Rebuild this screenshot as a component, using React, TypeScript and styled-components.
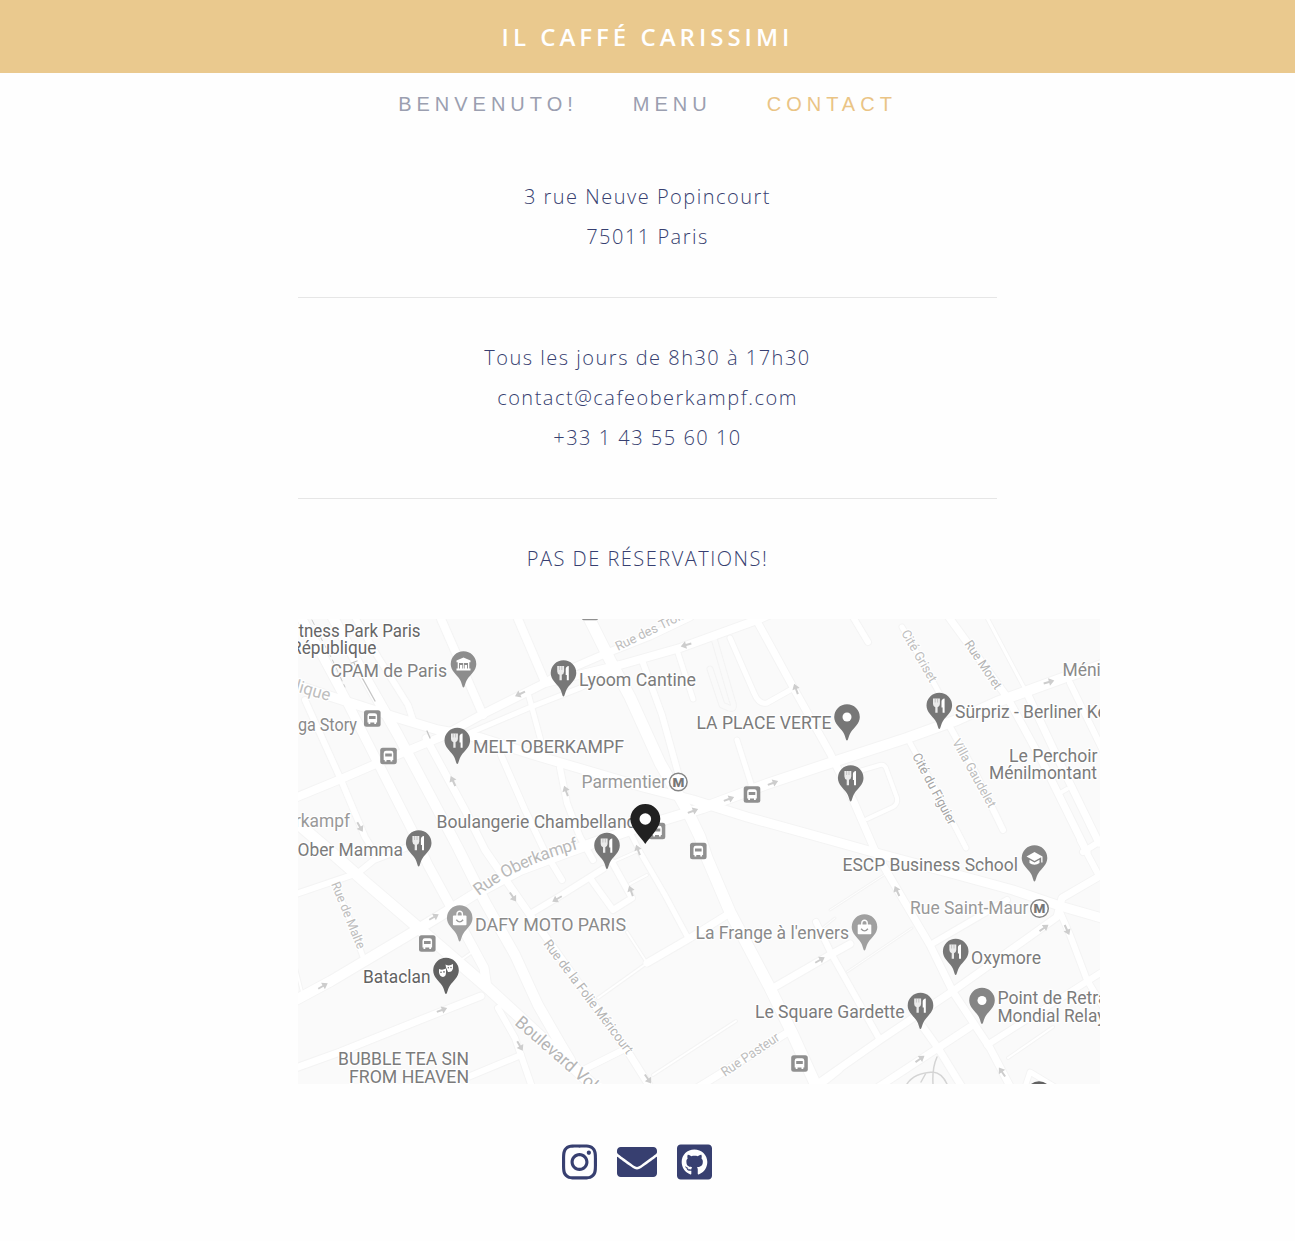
import React from 'react';
import styled, { createGlobalStyle, css } from 'styled-components';
import { FaInstagram, FaEnvelope, FaGithubSquare } from 'react-icons/fa';

const GlobalStyle = createGlobalStyle`
  * { box-sizing: border-box; }
  body { margin: 0; background: #fefefe; color: #373f70; font-family: 'Open Sans', sans-serif; }
`;

const Header = styled.header`
  height: 73px;
  display: flex;
  align-items: center;
  justify-content: center;
  background: #eac98e;
`;

const Title = styled.h1`
  margin: 0;
  padding-top: 1px;
  color: #fff;
  font-size: 24px;
  font-weight: 600;
  line-height: 36px;
  letter-spacing: 4px;
  text-transform: uppercase;
`;

const Nav = styled.nav`
  display: flex;
  justify-content: center;
  gap: 55px;
  padding-top: 16px;
  height: 104px;
`;

const NavLink = styled.a<{ $active?: boolean }>`
  font: 20px/30px 'Liberation Sans', Arial, sans-serif;
  letter-spacing: 5px;
  text-transform: uppercase;
  color: ${(p) => (p.$active ? '#eac485' : '#9b9fb0')};
`;

const Main = styled.main`
  width: 699px;
  margin: 0 auto;
`;

const Block = styled.section<{ $ruled?: boolean }>`
  padding-bottom: 40px;
  margin-bottom: 40px;
  text-align: center;
  ${(p) => p.$ruled && css`border-bottom: 1px solid #e6e6e6;`}
`;

const Line = styled.p`
  margin: 0;
  font-size: 20px;
  font-weight: 300;
  line-height: 40px;
  letter-spacing: 1.5px;
`;

const MapFrame = styled.svg`
  display: block;
  width: 802px;
  height: 465px;
  margin-top: -40px;
  font-family: Roboto, sans-serif;
`;

const Socials = styled.footer`
  display: flex;
  justify-content: center;
  padding: 58px 1px 0 0;
  height: 157px;
`;

const SocialLink = styled.a<{ $width: number }>`
  width: ${(p) => p.$width}px;
  height: 40px;
  margin-right: 20px;
  color: #373f70;
  svg { display: block; width: 100%; height: 40px; }
`;

const ROADS: [number, string][] = [
  [9, 'M290 683L348 702L398 718L438 730L481 738L531 754L568 765L643 787L693 800L747 817L830 840L880 854L947 872L1013 890L1060 906L1105 919'],
  [11, 'M290 817L331 852L365 882L421 930L458 962L488 988L525 1022L568 1062L600 1092'],
  [10, 'M290 1003L331 981L405 937L438 917L475 894L520 870L568 852L630 830L670 818L703 808L767 784L830 763L907 738L957 720L997 702L1063 678L1105 664'],
  [8, 'M290 800L341 779L378 763L441 737L485 713L545 683L620 665L680 648L757 620L775 612'],
  [5, 'M465 735L531 707L580 688L618 668'],
  [7, 'M545 682L570 669L607 653L650 636L690 617'],
  [9, 'M298 612L321 653L345 698L378 763L411 828L428 865L458 920L484 968L487 988'],
  [10, 'M330 612L365 677L398 735L431 797L458 848L485 902L515 955L538 1005L561 1045L570 1060'],
  [6, 'M352 612L378 657L408 705L413 720'],
  [7, 'M426 738L465 810L485 850L528 912L580 985L630 1055L652 1090'],
  [8, 'M438 612L483 715'],
  [8, 'M515 612L545 682'],
  [5, 'M528 693L545 756'],
  [6, 'M501 745V755L525 810L545 852L562 880'],
  [6, 'M560 768L567 803L580 837L593 860'],
  [11, 'M586 612L610 660L630 697L660 763L687 810L700 837L707 858L730 912L770 988L793 1035L818 1090'],
  [6, 'M643 663L662 715L680 780'],
  [5, 'M677 650L693 699'],
  [7, 'M752 612L793 687L830 753L853 800L876 853L887 872L930 945L953 992L990 1048L1012 1090'],
  [5, 'M737 740L753 790'],
  [5, 'M730 638L754 693Q759 705 767 703L792 689'],
  [6, 'M850 612L868 642'],
  [5, 'M902 627L920 658L943 700'],
  [6, 'M950 727L975 772L1003 830'],
  [5, 'M910 743L935 788L966 848'],
  [7, 'M945 612L1007 697L1043 763L1087 852'],
  [3, 'M984 612L1027 693'],
  [7, 'M1027 693L1060 763L1099 843'],
  [6, 'M1070 683L1105 755'],
  [4, 'M1060 793L1067 789'],
  [6, 'M1083 852L1105 838'],
  [4, 'M853 773L880 765Q884 764 886 768L897 798Q898 804 893 807L867 819'],
  [7, 'M820 1082L880 1040L953 991L1057 917L1062 898L1105 873'],
  [6, 'M1080 840L1098 874'],
  [6, 'M1060 912L1070 935L1087 980L1105 1010'],
  [6, 'M930 945L1007 900'],
  [6, 'M816 922L832 955L880 1040'],
  [1, 'M830 910L887 873M847 972L912 928M820 930L835 918'],
  [6, 'M987 1045L1105 970'],
  [2, 'M1008 1058L1053 1027'],
  [7, 'M877 1088L970 1027'],
  [7, 'M923 1027L938 1048L965 1092'],
  [7, 'M773 988L830 955L850 944'],
  [7, 'M697 1088L790 1031'],
  [5, 'M815 1090L840 1070'],
  [7, 'M647 963L690 938L730 913'],
  [2, 'M598 998L647 963L627 932'],
  [5, 'M625 822L640 852L665 895L687 936'],
  [6, 'M590 878L613 910L632 898L612 862'],
  [2, 'M613 862L640 850M630 884L647 875'],
  [6, 'M530 914L560 896L603 869'],
  [2, 'M653 1075L736 1021'],
  [6, 'M583 1070L627 1048'],
  [7, 'M290 1070L340 1052L420 1020L481 996'],
  [6, 'M468 1077L521 1055'],
  [6, 'M498 1008L515 1038L533 1090'],
  [6, 'M290 896L358 873L374 860L413 845'],
  [5, 'M334 882L348 915L363 957'],
  [2, 'M294 960L302 992M458 962L471 953'],
  [6, 'M305 700L341 780L365 837L378 858'],
  [5, 'M1026 1084L1030 1072L1060 1090'],
];

const COURT_LOOP = 'M713 635L732 700Q736 710 729 708L722 705L710 669';

const ARROWS: [number, number, number][] = [
  [520, 694, 155], [686, 645, 165], [796, 689, -110], [453, 781, -115], [360, 827, 60],
  [566, 791, -110], [729, 799, -20], [773, 783, -20], [693, 811, -20], [1049, 682, -15],
  [434, 917, -30], [513, 897, 55], [557, 899, 150], [323, 986, -30], [442, 1010, -20],
  [520, 1046, 60], [631, 891, -110], [638, 850, -110], [648, 1079, 55], [820, 960, -30],
  [897, 891, -115], [1044, 928, -35], [1067, 930, 65], [920, 1059, -35], [1002, 1072, -125],
];

type Kind = 'food' | 'dot' | 'bag' | 'bank' | 'mask' | 'school';

const PINS: [number, number, Kind, string][] = [
  [463.5, 664, 'bank', '#8d8d8d'], [563.5, 673, 'food', '#777'], [457.3, 740.5, 'food', '#777'],
  [847, 717, 'dot', '#777'], [939.3, 705.5, 'food', '#777'], [850.7, 778, 'food', '#777'],
  [418.7, 843, 'food', '#777'], [607, 845.5, 'food', '#777'], [1034.5, 858, 'school', '#858585'],
  [459.7, 918, 'bag', '#a0a0a0'], [446, 970.5, 'mask', '#626262'], [864.5, 927, 'bag', '#a0a0a0'],
  [955.7, 951.5, 'food', '#777'], [920.5, 1005.5, 'food', '#777'], [982, 1000.5, 'dot', '#858585'],
  [1039, 1094, 'food', '#626262'],
];

const STOPS: [number, number][] = [
  [372.3, 718.5], [388.5, 756], [752, 794.5], [657, 831], [698.3, 851], [427.3, 943.5],
  [799.5, 1063.5], [590, 612],
];

/* text, x, baseline, width, colour */
const LABELS: [string, number, number, number, string][] = [
  ['Fitness Park Paris', 285, 637, 135.5, '#666'],
  ['République', 291, 654, 85.5, '#666'],
  ['CPAM de Paris', 330.5, 677, 116.5, '#818181'],
  ['Oméga Story', 264, 731, 93, '#8a8a8a'],
  ['MELT OBERKAMPF', 473, 753, 151, '#7b7b7b'],
  ['Lyoom Cantine', 579, 685.5, 117, '#7b7b7b'],
  ['LA PLACE VERTE', 696.5, 729, 135, '#7b7b7b'],
  ['Ménilmontant', 1062.5, 675.5, 108, '#8a8a8a'],
  ['Sürpriz - Berliner Kebab', 955, 718, 181, '#7b7b7b'],
  ['Le Perchoir', 1009, 762, 88.5, '#7b7b7b'],
  ['Ménilmontant', 989, 779.4, 108, '#7b7b7b'],
  ['Parmentier', 581.5, 788, 85.5, '#999'],
  ['Boulangerie Chambelland', 436.5, 828, 200, '#7b7b7b'],
  ['Oberkampf', 264, 827, 86, '#999'],
  ['Ober Mamma', 297.5, 855.5, 105.5, '#7b7b7b'],
  ['ESCP Business School', 842.5, 870.5, 175.5, '#7b7b7b'],
  ['Rue Saint-Maur', 910, 914, 118.5, '#999'],
  ['DAFY MOTO PARIS', 475, 930.7, 151, '#8a8a8a'],
  ["La Frange à l'envers", 695.5, 939.3, 153.5, '#8a8a8a'],
  ['Bataclan', 363, 983, 67.5, '#626262'],
  ['Oxymore', 971, 964.3, 70, '#7b7b7b'],
  ['Point de Retrait', 997.5, 1004.3, 120, '#7b7b7b'],
  ['Mondial Relay', 997.5, 1021.7, 108, '#7b7b7b'],
  ['Le Square Gardette', 755, 1018.3, 149.5, '#7b7b7b'],
  ['BUBBLE TEA SIN', 338, 1065.4, 131, '#7b7b7b'],
  ['FROM HEAVEN', 349, 1083, 120, '#7b7b7b'],
];

/* text, x, y, rotation, size, width, colour */
const STREETS: [string, number, number, number, number, number, string][] = [
  ['République', 249, 678, 16, 17, 83, '#bebebe'],
  ['Rue des Trois Bornes', 618, 651, -26, 13, 120, '#bdbdbd'],
  ['Cité Griset', 901, 633, 60, 13, 58, '#bdbdbd'],
  ['Rue Moret', 964, 644, 56, 13, 56, '#b5b5b5'],
  ['Cité du Figuier', 912, 756, 62, 13, 79, '#a5a5a5'],
  ['Villa Gaudelet', 952, 742, 61, 13, 76, '#bdbdbd'],
  ['Rue de Malte', 331, 884, 68, 13, 71, '#bdbdbd'],
  ['Rue de la Folie Méricourt', 543, 944, 53, 13.5, 139, '#b5b5b5'],
  ['Boulevard Voltaire', 514, 1024, 41, 17.5, 136, '#b5b5b5'],
  ['Rue Pasteur', 725, 1077, -34, 13.5, 67, '#bdbdbd'],
];

const Cutlery = () => (
  <g fill="#fff">
    <path d="M-6.3-7H0.6V-1.5Q0.4 1.2-1.7 1.8V7.3H-4V1.8Q-6.2 1.1-6.3-1.5Z" opacity=".85" />
    <path d="M-4.1-7V-3M-1.7-7V-3" stroke="#aaa" strokeWidth=".6" />
    <path d="M2.2-4Q2.4-6.7 5.3-7V7.3H3.3V2H2.2Z" />
  </g>
);

const PinGlyph = ({ kind }: { kind: Kind }) => {
  switch (kind) {
    case 'food':
      return <Cutlery />;
    case 'dot':
      return <circle r="4.5" fill="#fff" />;
    case 'bag':
      return (
        <g>
          <rect x="-6.8" y="-2.5" width="13.6" height="9.8" rx="1" fill="#fff" />
          <path d="M-2.7-2V-4A2.7 2.7 0 0 1 2.7-4V-2" fill="none" stroke="#fff" strokeWidth="1.4" />
          <path d="M-3.4 1.8Q0 6 3.4 1.8" fill="none" stroke="#999" strokeWidth="1.4" />
        </g>
      );
    case 'bank':
      return <path d="M-7-3.5L0-6.5L7-3.5V-1.8H5.8V4.5H7V6.5H-7V4.5H-5.8V-1.8H-7ZM-4.5-1V4.5H-3.5V1H-1.2V4.5H-.4V-1ZM.4-1V4.5H1.2V1H3.5V4.5H4.5V-1Z" fill="#fff" fillRule="evenodd" />;
    case 'mask':
      return (
        <g fill="#fff">
          <path d="M-7-1.5Q-3.5 0 0-2V2Q0 6-3 6.5Q-6.3 6-7 2ZM-.5-6Q3-4 7-6.5L7-2Q6 2 2 1.5L0-3Z" />
          <g fill="#626262"><circle cx="-5" cy="1.7" r=".8" /><circle cx="-2" cy="1.4" r=".8" /><circle cx="2.3" cy="-2.8" r=".7" /><circle cx="5" cy="-3" r=".7" /></g>
        </g>
      );
    case 'school':
      return (
        <g fill="#fff">
          <path d="M-8-1.5L0-6L8-1.5V4.5H6.7V-.8L0 3Z" />
          <path d="M-5 1.8L0 4.5L5 1.8V5Q3 6.7 0 6.7Q-3 6.7-5 5Z" />
        </g>
      );
  }
};

const CityMap = () => (
  <MapFrame viewBox="298 619 802 465" role="img">
    <rect x="298" y="619" width="802" height="465" fill="#fafafa" />
    <g fill="none" strokeLinejoin="round" strokeLinecap="round">
      {ROADS.map(([w, d]) => <path key={d} d={d} stroke="#f4f4f4" strokeWidth={w + 2} />)}
      <path d={COURT_LOOP} stroke="#f3f3f3" strokeWidth="7" />
      <path d={COURT_LOOP} stroke="#fafafa" strokeWidth="5" />
      {ROADS.map(([w, d]) => <path key={d} d={d} stroke="#fff" strokeWidth={w} />)}
      <path d="M312 620L323 642L332 659L345 687" stroke="#ccc" strokeDasharray="5 4" />
      <path d="M349 664L357 661M354 663L375 701M427 731L430 738" stroke="#c5c5c5" strokeWidth="1.3" />
      <path d="M937 1057Q932 1068 933 1084M907 1084Q914 1073 933 1072Q942 1073 947 1084M921 1082L926 1073" stroke="#d4d4d4" strokeWidth="1.5" />
    </g>
    {ARROWS.map(([x, y, a]) => (
      <path key={`${x}-${y}`} transform={`translate(${x} ${y}) rotate(${a})`} d="M-5.5-1H0V-3.8L5.5 0L0 3.8V1H-5.5Z" fill="#cdcdcd" />
    ))}
    <g stroke="#fff" strokeWidth="2.5" strokeLinejoin="round" paintOrder="stroke">
      {STREETS.map(([t, x, y, a, s, w, c]) => (
        <text key={t} transform={`translate(${x} ${y}) rotate(${a})`} fontSize={s} textLength={w} lengthAdjust="spacingAndGlyphs" fill={c}>{t}</text>
      ))}
      <path id="oberkampf" d="M479 896Q520 863 590 846" fill="none" stroke="none" />
      <text fontSize="17" fill="#b9b9b9"><textPath href="#oberkampf" textLength="111">Rue Oberkampf</textPath></text>
      {LABELS.map(([t, x, y, w, c]) => (
        <text key={`${t}${x}`} x={x} y={y} fontSize="18" textLength={w} lengthAdjust="spacingAndGlyphs" fill={c}>{t}</text>
      ))}
    </g>
    {[[678.3, 782], [1039.5, 908.5]].map(([x, y]) => (
      <g key={x} transform={`translate(${x} ${y})`}>
        <circle r="8.8" fill="#fff" stroke="#858585" strokeWidth="1.5" />
        <text y="4.8" textAnchor="middle" fontSize="13.5" fontWeight="900" fill="#777">M</text>
      </g>
    ))}
    {STOPS.map(([x, y]) => (
      <g key={x} transform={`translate(${x} ${y})`}>
        <rect x="-8.3" y="-8.3" width="16.6" height="16.6" rx="2.5" fill="#909090" />
        <path d="M-4.8-3Q-4.6-5.2-2.5-5.2H2.5Q4.6-5.2 4.8-3V4H3.8V5.5H2V4H-2V5.5H-3.8V4H-4.8ZM-3.3-2.5V.5H3.3V-2.5Z" fill="#fff" fillRule="evenodd" />
      </g>
    ))}
    {PINS.map(([x, y, kind, fill]) => (
      <g key={`${x}-${y}`} transform={`translate(${x} ${y})`}>
        <path d="M0 23.5C-1.4 23.5-1.3 19-4 15C-7 10.5-12.8 6.5-12.8 0A12.8 12.8 0 0 1 12.8 0C12.8 6.5 7 10.5 4 15C1.3 19 1.4 23.5 0 23.5Z" fill={fill} />
        <PinGlyph kind={kind} />
      </g>
    ))}
    <path d="M645.3 844C641 837 630.3 828 630.3 819A15 15 0 0 1 660.3 819C660.3 828 649.6 837 645.3 844Z" fill="#212121" />
    <circle cx="645.3" cy="819" r="5.8" fill="#fff" />
  </MapFrame>
);

export default function App() {
  return (
    <>
      <GlobalStyle />
      <Header><Title>Il Caffé Carissimi</Title></Header>
      <Nav>
        <NavLink>Benvenuto!</NavLink>
        <NavLink>Menu</NavLink>
        <NavLink $active>Contact</NavLink>
      </Nav>
      <Main>
        <Block $ruled>
          <Line>3 rue Neuve Popincourt</Line>
          <Line>75011 Paris</Line>
        </Block>
        <Block $ruled>
          <Line>Tous les jours de 8h30 à 17h30</Line>
          <Line>contact@cafeoberkampf.com</Line>
          <Line>+33 1 43 55 60 10</Line>
        </Block>
        <Block>
          <Line>PAS DE RÉSERVATIONS!</Line>
        </Block>
        <CityMap />
      </Main>
      <Socials>
        <SocialLink $width={35}><FaInstagram /></SocialLink>
        <SocialLink $width={40}><FaEnvelope /></SocialLink>
        <SocialLink $width={35}><FaGithubSquare /></SocialLink>
      </Socials>
    </>
  );
}
